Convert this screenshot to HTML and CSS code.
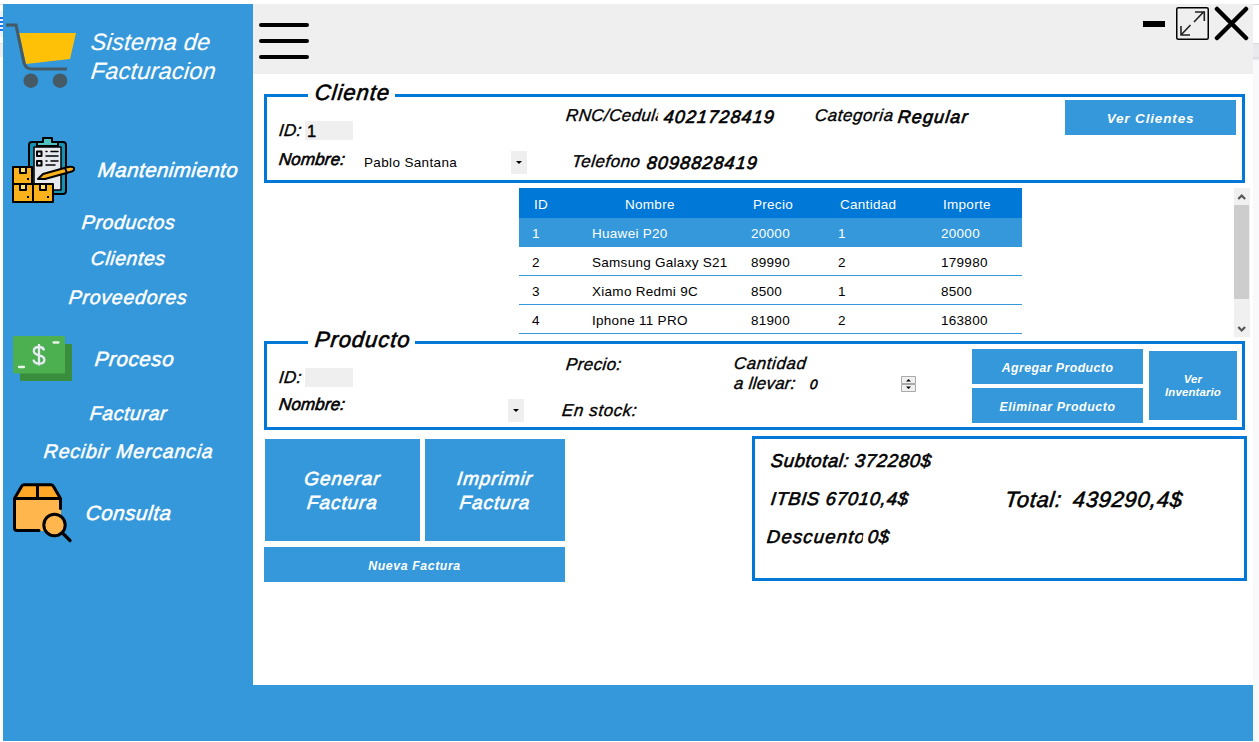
FILE: index.html
```html
<!DOCTYPE html>
<html lang="es">
<head>
<meta charset="utf-8">
<title>Sistema de Facturacion</title>
<link rel="stylesheet" href="styles.css">
</head>
<body>
<div class="edge edge-left">
  <svg width="3" height="60" viewBox="0 0 3 60"><path d="M0 4.500h3M0 43.500h3" stroke="#dcdde1"/><path d="M0 11h3v26H0z" fill="#edf1fa"/><path d="M0 18h3M0 22h3M0 26h3M0 30h3" stroke="#1a73e8" stroke-width="2"/><path d="M0 44h3v13H0z" fill="#eeeeef"/></svg>
</div>
<div class="app">
  <aside class="sidebar">
    <div class="brand">
      <svg width="76" height="76" viewBox="3 18 76 76"><path d="M19 33h57l-6 26-44 5z" fill="#ffc107"/><path d="M6 25h10l8 38q2 6 8 6h35" fill="none" stroke="#455a64" stroke-width="3"/><circle cx="30.800" cy="80.700" r="7.300" fill="#455a64"/><circle cx="60" cy="80.700" r="7.300" fill="#455a64"/></svg>
      <h1 class="brand-name"><span>Sistema de</span><span>Facturacion</span></h1>
    </div>
    <nav class="menu">
      <a class="head mant">
        <svg width="76" height="68" viewBox="3 136 76 68"><g stroke="#000" stroke-width="2" stroke-linejoin="round" stroke-linecap="round">
          <path d="M32 142h31q3 0 3 3v46q0 3-3 3H32q-3 0-3-3v-46q0-3 3-3z" fill="#1693b4"/>
          <path d="M34 147h27v43H34z" fill="#e6e9ed" stroke-width="1.500"/>
          <path d="M37 146v-4h6v-4h9v4h6v4z" fill="#4fc3c1"/>
          <path d="M37 151.500h4.500v4.500H37zM37 161h4.500v4.500H37z" fill="#e6e9ed"/><path d="M46 151.500h1M51 151.500h7M46 156h12M46 161h1M51 161h7M46 165h9" stroke-width="1.500"/>
          <path d="M38 179l5-5 25-7q5-1 6 1 1 3-4 4l-25 7z" fill="#f9b21b"/><path d="M65 168l2 5" />
          <path d="M13 167h19v17H13zM13 184h20v18H13zM33 184h20v18H33z" fill="#f9b21b"/>
          <path d="M20 167h6v6h-6zM20 184h6v6h-6zM40 184h6v6h-6z" fill="#ffe06a"/>
        </g><path d="M27 178h2v2h-2zM27 196h2v2h-2zM47 196h2v2h-2z"/></svg>
        <span>Mantenimiento</span>
      </a>
      <a class="sub productos">Productos</a>
      <a class="sub clientes">Clientes</a>
      <a class="sub proveedores">Proveedores</a>
      <a class="head proceso">
        <svg width="76" height="50" viewBox="3 334 76 50"><rect x="20" y="344" width="52" height="37" rx="1" fill="#388e3c"/><rect x="13" y="336" width="52" height="37.500" rx="1" fill="#4caf50"/><path d="M53.500 342.500h5M19 367h5" stroke="#e8f5e9" stroke-width="2.300" stroke-linecap="round"/><path d="M44 350.500q-.5-3.500-5-3.500-5.200 0-5.200 4 0 3 5.200 4.300 5.400 1 5.400 4.400 0 4-5.400 4-5 0-5.500-4M39 344v21.500" fill="none" stroke="#e8eaf6" stroke-width="2.300"/></svg>
        <span>Proceso</span>
      </a>
      <a class="sub facturar">Facturar</a>
      <a class="sub recibir">Recibir Mercancia</a>
      <a class="head consulta">
        <svg width="76" height="62" viewBox="3 482 76 62"><path d="M15 499h46v32H15z" fill="#ffb74d"/><path d="M15 498l8-13h30l8 13z" fill="#ffa726"/><path d="M39 530.500H17q-2.500 0-2.500-2.500v-29.500l7-12q.7-1.700 2.500-1.700h27q1.800 0 2.500 1.700l7 12v10M14.500 498.500h46M37.500 485v13" fill="none" stroke="#000" stroke-width="3" stroke-linecap="round" stroke-linejoin="round"/><circle cx="54.500" cy="525" r="10.700" fill="#ffb74d" stroke="#000" stroke-width="3"/><path d="M62.500 533l7.500 7.500" stroke="#000" stroke-width="3.200" stroke-linecap="round"/></svg>
        <span>Consulta</span>
      </a>
    </nav>
  </aside>

  <header class="topbar">
    <svg width="50" height="38" viewBox="0 0 50 38"><path d="M2 3h46M2 19h46M2 35h46" stroke="#000" stroke-width="4" stroke-linecap="round"/></svg>
    <svg class="window-buttons" width="108" height="36" viewBox="1141 6 108 36"><path d="M1143 24h22" stroke="#000" stroke-width="6"/><rect x="1176.750" y="7.750" width="31.500" height="31.500" rx="1.500" fill="none" stroke="#000" stroke-width="1.500"/><path d="M1181 35l9.500-10M1194 22l10-10.500M1195 12h9.300v9M1181 26v9h9" fill="none" stroke="#222" stroke-width="1.600"/><path d="M1217 9l29 29M1246 9l-29 29" stroke="#000" stroke-width="4.500" stroke-linecap="round"/></svg>
  </header>

  <main class="content">
    <section class="panel cliente">
      <h2 class="legend"><span>Cliente</span></h2>
      <div class="col-id">
        <div class="line"><label class="lbl w-id">ID:</label><span class="input">1</span></div>
        <div class="line second"><label class="lbl w-nombre">Nombre:</label><span class="combo-text">Pablo Santana</span><span class="drop"></span></div>
      </div>
      <div class="col-contact">
        <div class="line"><span class="lbl clip-rnc">RNC/Cedula:</span><b class="val">4021728419</b></div>
        <div class="line phone"><span class="lbl clip-tel">Telefono</span><b class="val">8098828419</b></div>
      </div>
      <div class="col-cat">
        <div class="line"><span class="lbl clip-cat">Categoria</span><b class="val">Regular</b></div>
      </div>
      <button class="btn ver-clientes">Ver Clientes</button>
    </section>

    <section class="items">
      <div class="grid">
        <div class="tr th"><span>ID</span><span>Nombre</span><span>Precio</span><span>Cantidad</span><span>Importe</span></div>
        <div class="tr selected"><span>1</span><span>Huawei P20</span><span>20000</span><span>1</span><span>20000</span></div>
        <div class="tr"><span>2</span><span>Samsung Galaxy S21</span><span>89990</span><span>2</span><span>179980</span></div>
        <div class="tr"><span>3</span><span>Xiamo Redmi 9C</span><span>8500</span><span>1</span><span>8500</span></div>
        <div class="tr"><span>4</span><span>Iphone 11 PRO</span><span>81900</span><span>2</span><span>163800</span></div>
      </div>
      <div class="scrollbar">
        <svg width="16" height="17" viewBox="0 0 16 17"><path d="M4.300 11L7.700 7.500 11.100 11" fill="none" stroke="#555" stroke-width="2.200"/></svg>
        <div class="thumb"></div>
        <svg width="16" height="17" viewBox="0 0 16 17"><path d="M4.300 7L7.700 10.500 11.100 7" fill="none" stroke="#555" stroke-width="2.200"/></svg>
      </div>
    </section>

    <section class="panel producto">
      <h2 class="legend"><span>Producto</span></h2>
      <div class="col-id">
        <div class="line"><label class="lbl w-id">ID:</label><span class="input"></span></div>
        <div class="line second"><label class="lbl w-nombre">Nombre:</label><span class="drop"></span></div>
      </div>
      <div class="col-price">
        <div class="lbl precio">Precio:</div>
        <div class="lbl stock">En stock:</div>
      </div>
      <div class="col-qty">
        <div class="lbl qty-label">Cantidad</div>
        <div class="line"><span class="lbl qty-second">a llevar:</span><b class="qty">0</b>
          <svg class="spinner" width="16" height="17" viewBox="0 0 16 17"><path d="M.5.500h14v7H.500zM.500 8.500h14v7H.500z" fill="#f0f0f0" stroke="#a9a9a9"/><path d="M5 5.500h5L7.500 3zM5 10.500h5L7.500 13z"/></svg>
        </div>
      </div>
      <div class="stack">
        <button class="btn small agregar">Agregar Producto</button>
        <button class="btn small eliminar">Eliminar Producto</button>
      </div>
      <button class="btn inventario">Ver<br>Inventario</button>
    </section>

    <section class="bottom">
      <div class="actions">
        <div class="pair">
          <button class="btn big generar"><span>Generar</span><span>Factura</span></button>
          <button class="btn big imprimir"><span>Imprimir</span><span>Factura</span></button>
        </div>
        <button class="btn small nueva">Nueva Factura</button>
      </div>
      <div class="totals">
        <div class="breakdown">
          <div class="sum s1"><span>Subtotal:</span><b>372280$</b></div>
          <div class="sum s2"><span>ITBIS</span><b>67010,4$</b></div>
          <div class="sum s3"><span>Descuento:</span><b>0$</b></div>
        </div>
        <div class="total"><span>Total:</span><b>439290,4$</b></div>
      </div>
    </section>
  </main>
  <footer class="footer"></footer>
</div>
<div class="edge edge-right"></div>
</body>
</html>
```
FILE: styles.css
```css
* { box-sizing: border-box; }
body {
  margin: 0;
  width: 1259px;
  height: 742px;
  overflow: hidden;
  display: flex;
  background: #fff;
  color: #000;
  font-family: "Liberation Sans", Arial, sans-serif;
}
h1, h2 { margin: 0; font-weight: normal; }
b { font-weight: normal; }
svg { display: block; flex: none; }

/* Steeper slant for the interface's oblique lettering */
.brand-name span, .head span, .sub, .legend span, .lbl, .val, .sum span, .sum b,
.total span, .total b, .big span, .qty { transform: skewX(-6deg); }

.edge-left { width: 3px; }
.edge-right {
  width: 6px;
  background: linear-gradient(#fff 4px, #d5d6da 4px 5px, #fff 5px 43px, #d9dae0 43px 44px, #e9eaee 44px 57px, #dcdde2 57px 58px, #f8f9fb 61px);
}

.app {
  width: 1250px;
  height: 737px;
  margin-top: 4px;
  display: grid;
  grid-template-columns: 250px 1fr;
  grid-template-rows: 70px 611px 56px;
}
.sidebar { grid-row: 1 / 4; background: #3498db; color: #fff; font-style: italic; }
.footer { background: #3498db; }

/* Sidebar */
.brand { display: flex; height: 132px; padding-top: 14px; }
.brand-name {
  margin: 10px 0 0 12px;
  font-size: 23.5px;
  line-height: 29px;
  letter-spacing: .2px;
  -webkit-text-stroke: .15px;
}
.brand-name span { display: block; }
.menu { display: flex; flex-direction: column; }
.head { display: flex; align-items: center; font-size: 20.5px; -webkit-text-stroke: .55px; }
.sub { display: flex; align-items: center; font-size: 19.5px; -webkit-text-stroke: .5px; }
.mant { height: 68px; letter-spacing: .45px; }
.mant span { margin-left: 19px; }
.productos { height: 36px; padding-left: 79px; letter-spacing: .65px; }
.clientes { height: 36px; padding-left: 88px; letter-spacing: .55px; }
.proveedores { height: 42px; padding-left: 66px; letter-spacing: .75px; }
.proceso { height: 82px; letter-spacing: .6px; }
.proceso span { margin-left: 16px; }
.facturar { height: 26px; padding-left: 87px; letter-spacing: .6px; }
.recibir { height: 50px; padding-left: 41px; letter-spacing: .8px; }
.consulta { height: 73px; letter-spacing: .6px; }
.consulta span { margin-left: 7px; }

/* Header */
.topbar {
  display: flex;
  justify-content: space-between;
  align-items: flex-start;
  background: #efefef;
  padding: 2px 4px 0 6px;
}
.topbar svg:first-child { margin-top: 16px; }

/* Form panels */
.content { background: #fff; padding: 20px 6px 0 11px; }
.panel {
  position: relative;
  display: flex;
  align-items: flex-start;
  width: 981px;
  height: 89px;
  border: 3px solid #0078d7;
}
.legend {
  position: absolute;
  left: 41px;
  top: -17px;
  height: 26px;
  padding-left: 7px;
  background: #fff;
  font-size: 22px;
  line-height: 26px;
  font-style: italic;
  letter-spacing: .95px;
  -webkit-text-stroke: .6px;
}
.legend span { display: block; }
.cliente .legend { width: 87px; }
.producto .legend { width: 107px; }
.line { display: flex; height: 20px; align-items: center; }
.lbl {
  font-size: 17px;
  line-height: 22px;
  font-style: italic;
  white-space: nowrap;
  -webkit-text-stroke: .35px;
}
.val {
  padding-top: 2px;
  font-size: 18px;
  line-height: 20px;
  font-style: italic;
  letter-spacing: 1.1px;
  -webkit-text-stroke: .65px;
}
.col-id { width: 298px; padding: 23px 0 0 12px; }
.cliente .second { margin-top: 9px; }
.w-id { width: 26px; padding-top: 1px; letter-spacing: .4px; }
.w-nombre { width: 85px; padding-top: 1px; letter-spacing: .15px; -webkit-text-stroke: .6px; }
.input {
  width: 48px;
  height: 19px;
  padding-left: 2px;
  background: #efefef;
  font-size: 16.5px;
  line-height: 20px;
  -webkit-text-stroke: .4px;
}
.producto .second .lbl { padding-top: 0; }
.combo-text {
  width: 147px;
  font-size: 13.5px;
  letter-spacing: .35px;
  margin-top: 6px;
}
.drop {
  display: flex;
  width: 16px;
  height: 23px;
  margin-top: 6px;
  align-items: center;
  justify-content: center;
  background: #efefef;
}
.drop::after { content: ""; border: 3px solid transparent; border-top-color: #000; border-bottom: 0; }
.col-contact { width: 249px; padding-top: 9px; }
.phone { margin-top: 26px; padding-left: 7px; }
.clip-rnc { width: 93px; overflow: hidden; padding-left: 1px; margin-right: 6px; letter-spacing: .4px; }
.clip-tel { width: 71px; margin-right: 4px; letter-spacing: .5px; }
.col-cat { padding: 9px 0 0 1px; }
.clip-cat { width: 80px; margin-right: 3px; letter-spacing: .55px; }

.btn {
  border: 0;
  padding: 2px 0 0;
  background: #3498db;
  color: #fff;
  font: italic bold 13.5px/16px "Liberation Sans", Arial, sans-serif;
}
.ver-clientes { width: 171px; height: 35px; margin: 3px 6px 0 auto; letter-spacing: .85px; }

/* Items table */
.items { display: flex; height: 158px; padding: 5px 0 0 255px; justify-content: space-between; }
.grid { width: 503px; font-size: 13.5px; letter-spacing: .28px; }
.tr {
  display: grid;
  grid-template-columns: 60px 159px 87px 103px 1fr;
  align-items: center;
  height: 29px;
  padding: 2px 0 0 13px;
  border-bottom: 1px solid #3498db;
}
.th { height: 30px; background: #0078d7; border: 0; color: #fff; }
.th span { padding-left: 2px; }
.th span:nth-child(2) { padding-left: 33px; }
.selected { background: #3498db; color: #fff; }
.scrollbar { width: 16px; height: 149px; margin-right: -3px; background: #f0f0f0; display: flex; flex-direction: column; }
.scrollbar svg:last-child { margin-top: auto; }
.thumb { width: 15px; height: 94px; background: #cdcdcd; }

/* Product panel */
.producto .second { margin-top: 8px; }
.producto .drop { margin: 10px 0 0 144px; }
.col-price { width: 168px; padding-top: 10px; }
.precio { padding-left: 1px; letter-spacing: .4px; }
.stock { margin: 24px 0 0 -3px; letter-spacing: .6px; }
.col-qty { width: 239px; padding: 9px 0 0 1px; }
.qty-label { letter-spacing: .55px; }
.col-qty .line { margin-top: -1px; }
.qty-second { width: 76px; letter-spacing: .25px; }
.qty { width: 91px; font-size: 13.5px; font-style: italic; -webkit-text-stroke: .6px; }
.qty-second + .qty { padding-left: 0; transform-origin: left; }
.stack { display: flex; flex-direction: column; gap: 4px; padding-top: 5px; }
.small { font-size: 12.3px; width: 171px; height: 35px; }
.agregar { letter-spacing: .45px; }
.eliminar { letter-spacing: .6px; }
.inventario { width: 88px; height: 69px; margin: 7px 0 0 6px; padding: 0; font-size: 11.5px; line-height: 13px; letter-spacing: .1px; }

/* Bottom row */
.bottom { display: flex; padding-top: 6px; justify-content: space-between; }
.actions { padding-top: 3px; width: 301px; }
.pair { display: flex; gap: 5px; padding-left: 1px; }
.big { height: 102px; font-size: 19px; line-height: 24px; font-weight: normal; letter-spacing: .9px; -webkit-text-stroke: .6px; }
.big span { display: block; }
.generar { width: 155px; }
.imprimir { width: 140px; }
.nueva { display: block; width: 301px; margin-top: 6px; letter-spacing: .6px; }
.totals {
  display: flex;
  width: 495px;
  height: 145px;
  border: 3px solid #0078d7;
  font-style: italic;
}
.breakdown { width: 249px; padding: 11px 0 0 15px; }
.sum { display: flex; height: 22px; line-height: 22px; font-size: 18.5px; letter-spacing: .7px; -webkit-text-stroke: .6px; }
.sum span { overflow: hidden; white-space: nowrap; }
.s1 span { width: 85px; padding-left: 1px; letter-spacing: .6px; }
.s2 { margin-top: 16px; }
.s2 span { width: 56px; padding-left: 1px; letter-spacing: .5px; }
.s3 { margin-top: 16px; }
.s3 span { width: 96px; margin: 0 5px 0 -3px; letter-spacing: 1.2px; }
.total { display: flex; padding: 48px 0 0 1px; height: 74px; line-height: 26px; font-size: 22px; letter-spacing: .65px; -webkit-text-stroke: .55px; }
.total span { width: 68px; }
```
